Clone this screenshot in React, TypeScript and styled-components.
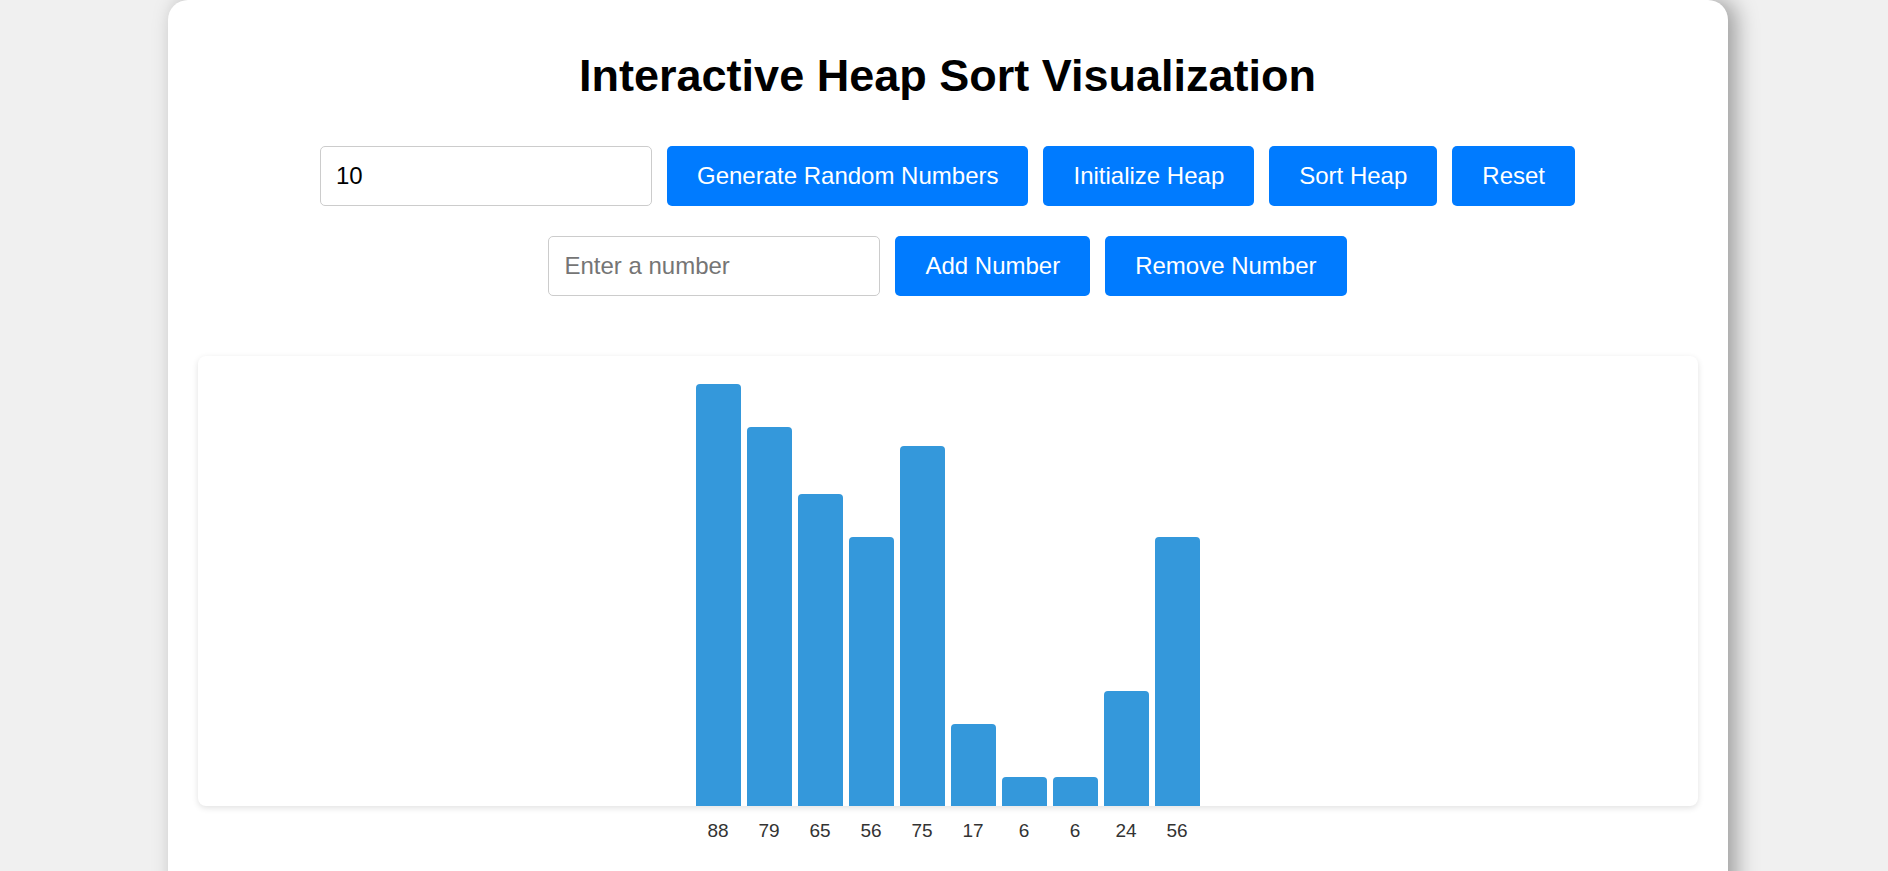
import React, { useState } from "react";
import styled, { createGlobalStyle } from "styled-components";

const GlobalStyle = createGlobalStyle`
  html, body {
    margin: 0;
    padding: 0;
    background: #f0f0f0;
    overflow: hidden;
    font-family: "Liberation Sans", Arial, sans-serif;
  }
`;

const Page = styled.div`
  display: flex;
  justify-content: center;
  padding-left: 7px;
  min-height: 871px;
`;

const Card = styled.div`
  width: 1500px;
  padding: 20px 30px 120px;
  background: #ffffff;
  border-radius: 20px;
  box-shadow: 8px 0 22px rgba(0, 0, 0, 0.35);
  display: flex;
  flex-direction: column;
  align-items: center;
`;

const Title = styled.h1`
  margin: 30px 0 44px;
  font-size: 45px;
  font-weight: bold;
  color: #000;
  text-align: center;
`;

const Controls = styled.div<{ $mb: number }>`
  display: flex;
  justify-content: center;
  gap: 15px;
  margin-bottom: ${(p) => p.$mb}px;
`;

const NumberInput = styled.input`
  width: 300px;
  padding: 15px;
  font-size: 24px;
  font-family: "Liberation Sans", Arial, sans-serif;
  border: 1px solid #ccc;
  border-radius: 5px;
  color: #000;
  outline: none;
  &::placeholder {
    color: #757575;
  }
`;

const Button = styled.button`
  padding: 15px 30px;
  font-size: 24px;
  font-family: "Liberation Sans", Arial, sans-serif;
  background: #007bff;
  color: #fff;
  border: none;
  border-radius: 5px;
  cursor: pointer;
`;

const Chart = styled.div`
  width: 1500px;
  height: 450px;
  background: #fff;
  border-radius: 8px;
  box-shadow: 0 2px 6px rgba(0, 0, 0, 0.12);
  display: flex;
  justify-content: center;
  align-items: flex-end;
  gap: 6px;
`;

const Bar = styled.div`
  width: 45px;
  background: #3498db;
  border-radius: 4px 4px 0 0;
`;

const Labels = styled.div`
  display: flex;
  justify-content: center;
  gap: 6px;
  margin-top: 14px;
`;

const Label = styled.div`
  width: 45px;
  text-align: center;
  font-size: 19px;
  color: #333;
`;

export default function App() {
  const [count, setCount] = useState("10");
  const [num, setNum] = useState("");
  const values = [88, 79, 65, 56, 75, 17, 6, 6, 24, 56];
  return (
    <>
      <GlobalStyle />
      <Page>
        <Card>
          <Title>Interactive Heap Sort Visualization</Title>
          <Controls $mb={30}>
            <NumberInput value={count} onChange={(e) => setCount(e.target.value)} />
            <Button>Generate Random Numbers</Button>
            <Button>Initialize Heap</Button>
            <Button>Sort Heap</Button>
            <Button>Reset</Button>
          </Controls>
          <Controls $mb={60}>
            <NumberInput
              placeholder="Enter a number"
              value={num}
              onChange={(e) => setNum(e.target.value)}
            />
            <Button>Add Number</Button>
            <Button>Remove Number</Button>
          </Controls>
          <Chart>
            {values.map((v, i) => (
              <Bar key={i} style={{ height: `${v * 4.8}px` }} />
            ))}
          </Chart>
          <Labels>
            {values.map((v, i) => (
              <Label key={i}>{v}</Label>
            ))}
          </Labels>
        </Card>
      </Page>
    </>
  );
}
